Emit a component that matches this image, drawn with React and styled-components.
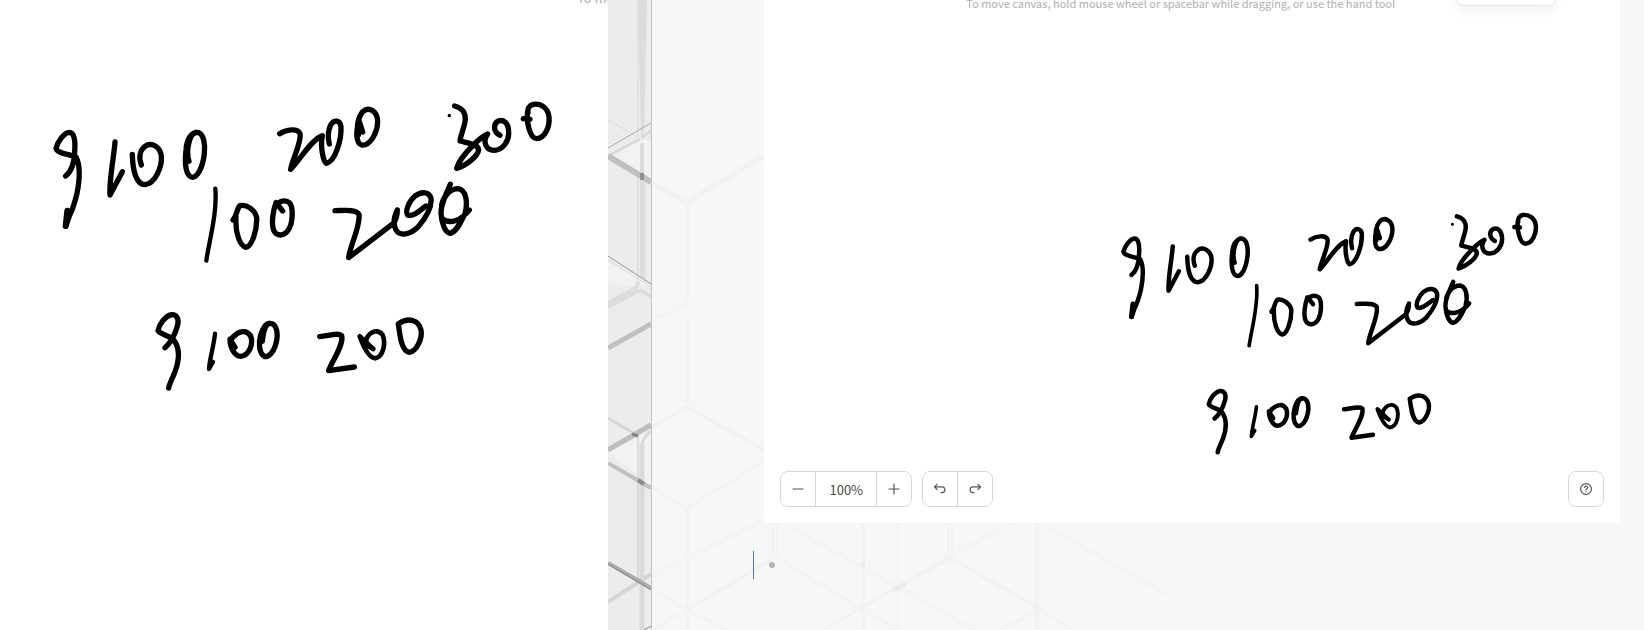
import React from "react";
import styled, { createGlobalStyle } from "styled-components";

const GlobalStyle = createGlobalStyle`
  * { box-sizing: border-box; }
  body {
    margin: 0;
    background: #fff;
    font-family: "Noto Sans CJK SC", "Noto Sans", sans-serif;
  }
  button { font: inherit; }
`;

const Page = styled.main`
  display: grid;
  grid-template-columns: 37% 44px minmax(0, 1fr);
  min-height: 100vh;
  overflow: hidden;
`;

const PreviewPane = styled.section`
  overflow: hidden;
  background: #fff;
`;

const Hint = styled.p`
  display: flow-root;
  margin: 0;
  height: ${(p) => (p.$large ? 90 : 203)}px;
  padding-left: ${(p) => (p.$large ? 577 : 202)}px;
  font-size: ${(p) => (p.$large ? 13 : 11)}px;
  line-height: 20px;
  white-space: nowrap;
  color: #b0b0b0;

  span {
    display: block;
    margin-top: ${(p) => (p.$large ? -12 : -7)}px;
  }
`;

const Ink = styled.svg`
  display: block;
  flex: none;
  width: ${(p) => p.$width}px;
  margin-left: ${(p) => p.$indent}px;
  fill: none;
  stroke: #000;
  stroke-width: 16;
  stroke-linecap: round;
  stroke-linejoin: round;
`;

const Strip = styled.div`
  position: relative;
  overflow: hidden;
  background: #ececec;
  border-right: 1px solid #b3c5dc;
`;

const Backdrop = styled.svg`
  position: absolute;
  top: 0;
  left: 0;
  fill: none;
`;

const EditorPane = styled.section`
  position: relative;
  overflow: hidden;
  padding: 0 24px 0 112px;
  background: #f7f7f7;
`;

const Canvas = styled.div`
  position: relative;
  display: flex;
  flex-direction: column;
  overflow: hidden;
  background: #fff;
`;

const MenuEdge = styled.div`
  position: absolute;
  top: -30px;
  right: 65px;
  width: 98px;
  height: 35px;
  border-radius: 6px;
  background: #fff;
  box-shadow: 0 0 2px rgba(0, 0, 0, 0.2), 0 6px 14px rgba(0, 0, 0, 0.06);
`;

const Footer = styled.footer`
  display: flex;
  gap: 10px;
  padding: 9px 16px 16px;
`;

const ButtonGroup = styled.div`
  display: flex;
  height: 36px;
  overflow: hidden;
  border: 1px solid #d6d6d6;
  border-radius: 8px;
  margin-left: ${(p) => (p.$end ? "auto" : "0")};
`;

const ToolButton = styled.button`
  display: flex;
  align-items: center;
  justify-content: center;
  width: ${(p) => (p.$wide ? 61 : 35)}px;
  padding: 0;
  border: 0;
  background: #fff;
  color: #484848;
  font-size: 13px;

  & + & { border-left: 1px solid #d6d6d6; }
  &:first-child { width: 34px; }
`;

const Icon = styled.svg`
  width: 16px;
  height: 16px;
  fill: none;
  stroke: #555;
  stroke-width: 1.2;
  stroke-linecap: round;
  stroke-linejoin: round;
`;

const NoteLine = styled.div`
  position: relative;
  display: flex;
  align-items: center;
  gap: 15px;
  height: 28px;
  margin: 28px 0 0 -11px;
`;

const Caret = styled.span`
  width: 1px;
  height: 28px;
  background: #4480dc;
`;

const Bullet = styled.span`
  width: 6px;
  height: 6px;
  border-radius: 50%;
  background: #b5b5b5;
`;

function Handwriting({ width, indent }) {
  return (
    <Ink $width={width} $indent={indent} viewBox="40 90 520 310" role="img" aria-label="Handwritten numbers">
      <g transform="translate(40 90) scale(.33333)">
        <path d="M77 258C96 243 103 218 104 185C107 148 101 127 88 127C72 128 53 155 48 175C52 190 84 192 108 201C123 230 119 270 111 310C103 344 96 362 88 378L78 408" />
        <path d="M82 362L77 408" strokeWidth="18" />
        <path d="M225 156C222 200 207 270 210 315L247 245" />
        <path d="M277 193C278 245 290 284 315 284C345 282 367 230 364 198C360 168 335 158 318 167C300 178 295 200 304 225" />
        <path d="M447 214C436 180 450 127 470 127C492 127 496 165 493 190C488 235 472 261 458 262C438 260 433 225 438 180C440 150 452 132 468 127" />
        <path d="M526 296C532 370 508 450 499 512" strokeWidth="13" />
        <path d="M579 390C592 375 590 355 600 347C620 342 645 360 650 382C652 420 635 470 618 472C600 468 585 430 588 380" />
        <path d="M728 363L708 338C700 360 692 400 702 423C712 440 735 440 748 415C758 395 761 350 748 338C735 329 718 332 710 345" />
      </g>
      <g transform="translate(260 90) scale(.33333)">
        <path d="M59 131C80 118 112 114 120 130C126 155 96 210 92 238C120 210 152 150 187 137C180 170 190 215 199 220C225 215 245 150 243 110C240 90 222 88 212 105C202 125 204 145 208 162" />
        <path d="M308 126L298 95C287 120 287 160 305 165C330 168 352 130 353 95C352 60 325 50 308 65C295 80 288 110 295 135" />
        <path d="M568 76v1" strokeWidth="10" />
        <path d="M584 48C612 55 620 75 614 100C608 125 600 145 600 153C620 158 655 162 656 180C653 200 615 228 590 235C595 215 620 185 640 165C655 150 665 140 683 132C668 150 675 180 700 181C730 182 748 150 746 125C745 98 730 88 715 93C700 100 698 125 720 136" />
        <path d="M790 86L810 88M805 55C795 90 810 146 830 146C855 145 870 110 867 80C864 55 845 40 820 43C808 46 802 56 804 68" />
        <path d="M225 362C250 362 287 356 297 373C302 410 270 465 266 503L400 400C412 385 412 372 412 360C402 380 398 400 408 420C420 440 450 435 475 410C500 380 516 350 513 325C508 305 485 303 465 318C445 335 435 365 443 375C460 382 480 360 498 348" />
        <path d="M571 283C560 310 542 340 543 370C545 400 555 428 570 430C590 426 603 395 615 370C624 338 619 300 595 296C570 296 550 320 545 345M546 386C570 405 605 390 628 360" />
      </g>
      <g transform="translate(140 300) scale(.33333)">
        <path d="M75 143C90 130 105 105 113 75C118 55 108 43 95 44C75 48 58 72 54 92C62 105 95 108 103 122C122 150 118 180 105 215C95 240 88 252 86 264" />
        <path d="M225 101C221 140 209 175 207 207L219 186" strokeWidth="13" />
        <path d="M285 142L270 117C270 145 285 168 302 169C330 165 340 130 332 108C318 85 290 95 274 118" />
        <path d="M367 124C370 95 375 72 390 70C410 70 416 100 408 130C400 160 385 171 374 170C357 160 355 130 362 105C368 85 378 70 388 70" />
        <path d="M539 110C565 108 592 97 605 107C612 135 575 185 566 212L643 201" />
        <path d="M700 147L659 109C670 140 685 174 706 175C730 170 738 130 728 105C715 87 692 92 680 115C676 130 680 138 700 147" strokeWidth="14" />
        <path d="M775 72C780 110 785 154 808 157C830 154 848 115 843 90C836 60 805 50 775 72" />
      </g>
    </Ink>
  );
}

function StripLines() {
  return (
    <Backdrop width="43" height="630" viewBox="608 0 43 630" aria-hidden="true">
      <path d="M608 153L640 137L651 142V180ZM608 283V259L651 285L637 287ZM608 452L634 438L651 430V486Z" fill="#f2f2f2" />
      <path d="M638 0H647L644 137H641Z" fill="#dcdcdc" />
      <path d="M608 120L638 137M638 0V136" stroke="#dadada" />
      <path d="M608 156L640 139M641 138L651 131" stroke="#d9d9d9" strokeWidth="3" />
      <path d="M608 148L651 123" stroke="#aaa" />
      <path d="M642 143V278" stroke="#dcdcdc" strokeWidth="4" />
      <path d="M638 170V282M645 180V282" stroke="#d3d3d3" />
      <path d="M608 156L651 182" stroke="#c0c0c0" strokeWidth="6" />
      <path d="M642 173V180" stroke="#909090" strokeWidth="4" />
      <path d="M608 256L651 284" stroke="#999" />
      <path d="M608 260L651 287" stroke="#d8d8d8" />
      <path d="M608 307L634 293Q641 288 651 297M608 303L632 290Q638 287 638 282" stroke="#dcdcdc" strokeWidth="4" />
      <path d="M608 348L651 324" stroke="#c0c0c0" strokeWidth="5" />
      <path d="M608 418L635 434" stroke="#d5d5d5" strokeWidth="3" />
      <path d="M642 444V630" stroke="#dadada" strokeWidth="5" />
      <path d="M642 446Q642 438 651 431" stroke="#dadada" strokeWidth="3" />
      <path d="M638 435V582" stroke="#c6c6c6" />
      <path d="M608 450L651 425" stroke="#bdbdbd" strokeWidth="5" />
      <path d="M632 434L638 436" stroke="#858585" strokeWidth="3" />
      <path d="M608 463L651 488" stroke="#c0c0c0" strokeWidth="4" />
      <path d="M638 480L644 484" stroke="#8b8b8b" strokeWidth="4" />
      <path d="M608 602L651 574" stroke="#d6d6d6" strokeWidth="4" />
      <path d="M608 563L651 588" stroke="#aaa" strokeWidth="4" />
      <path d="M608 564L651 590M644 630L651 626" stroke="#888" />
    </Backdrop>
  );
}

function EditorLines() {
  return (
    <Backdrop width="992" height="630" viewBox="652 0 992 630" aria-hidden="true">
      <g stroke="#f4f4f4" strokeWidth="1">
        <path d="M652 123L700 100M652 143L764 212M710 118L764 147M687 304L764 262M693 310L764 350M690 407L764 361" />
        <path d="M652 575L764 520M790 527L975 630M950 557L1010 523M1040 523L1165 593" strokeWidth="4" />
        <path d="M898 523V630" strokeWidth="5" />
        <path d="M1165 593L1098 613M1165 593L1200 610M1154 523V580" />
      </g>
      <g stroke="#f2f2f2" strokeWidth="5">
        <path d="M652 183L682 200Q687 202 692 199L764 156" />
        <path d="M687 202V302M687 318V403M652 427L687 407L764 450M687 509V630M687 610L771 560" strokeWidth="4" />
        <path d="M652 320L687 304M652 488L687 508L764 461M652 588L687 610L727 630M687 610L652 630M773 523V557M777 523V557M777 558L860 608L825 630M860 608L900 630" strokeWidth="2" />
        <path d="M860 608L944 561Q949 557 954 560L1040 609M863 523V630M1037 523V630" strokeWidth="4" />
        <path d="M948 523V554L942 560M952 523V554M1000 630L1040 609L1073 630" strokeWidth="2" />
      </g>
      <path d="M894 590L905 584M863 563V567" stroke="#eaeaea" strokeWidth="4" />
    </Backdrop>
  );
}

export default function App() {
  return (
    <>
      <GlobalStyle />
      <Page>
        <PreviewPane>
          <Hint $large><span>To move</span></Hint>
          <Handwriting width={520} indent={40} />
        </PreviewPane>
        <Strip><StripLines /></Strip>
        <EditorPane>
          <EditorLines />
          <Canvas>
            <Hint><span>To move canvas, hold mouse wheel or spacebar while dragging, or use the hand tool</span></Hint>
            <MenuEdge />
            <Handwriting width={435} indent={346} />
            <Footer>
              <ButtonGroup>
                <ToolButton aria-label="Zoom out"><Icon viewBox="0 0 16 16"><path d="M3 8h10" /></Icon></ToolButton>
                <ToolButton $wide aria-label="Reset zoom">100%</ToolButton>
                <ToolButton aria-label="Zoom in"><Icon viewBox="0 0 16 16"><path d="M3 8h10M8 3v10" /></Icon></ToolButton>
              </ButtonGroup>
              <ButtonGroup>
                <ToolButton aria-label="Undo"><Icon viewBox="0 0 16 16"><path d="M5 8.5L2.5 5.8L5 3.3M2.8 5.8H10a2.9 2.9 0 0 1 0 5.8H9" /></Icon></ToolButton>
                <ToolButton aria-label="Redo"><Icon viewBox="0 0 16 16"><path d="M11 8.5L13.5 5.8L11 3.3M13.2 5.8H6a2.9 2.9 0 0 0 0 5.8H7" /></Icon></ToolButton>
              </ButtonGroup>
              <ButtonGroup $end>
                <ToolButton aria-label="Help">
                  <Icon viewBox="0 0 16 16">
                    <circle cx="8" cy="8" r="5.4" />
                    <path d="M6.6 6.5a1.5 1.5 0 1 1 2.2 1.4C8.2 8.2 8 8.4 8 9M8 10.7v.1" />
                  </Icon>
                </ToolButton>
              </ButtonGroup>
            </Footer>
          </Canvas>
          <NoteLine><Caret /><Bullet /></NoteLine>
        </EditorPane>
      </Page>
    </>
  );
}
